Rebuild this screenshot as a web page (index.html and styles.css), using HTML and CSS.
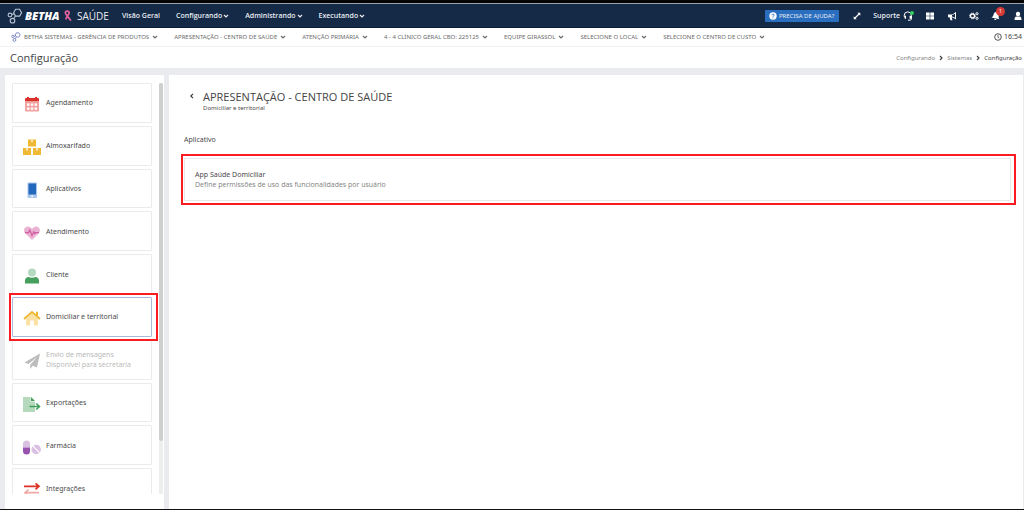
FILE: index.html
```html
<!DOCTYPE html>
<html lang="pt-BR">
<head>
<meta charset="utf-8">
<title>Configuração - Betha Saúde</title>
<link rel="stylesheet" href="styles.css">
</head>
<body>
<svg class="defs" aria-hidden="true">
  <symbol id="chev" viewBox="0 0 6 6"><path d="M1 2l2 2 2-2" fill="none" stroke="currentColor" stroke-width="1.2"/></symbol>
  <symbol id="next" viewBox="0 0 6 6"><path d="M2 1l2 2-2 2" fill="none" stroke="currentColor" stroke-width="1.2"/></symbol>
  <symbol id="rings" viewBox="0 0 16 16"><g fill="none" stroke="currentColor" stroke-width="1.1"><path d="M8.600 1.300h4l2 3.400-2 3.400h-4l-2-3.400z"/><circle cx="3" cy="7" r="1.900"/><circle cx="5.500" cy="12.700" r="2.300"/><path d="M5 6.600l2-.8M6.600 10.700l1.800-2.700"/></g></symbol>
</svg>
<header class="navbar">
  <a class="brand" href="#">
    <svg class="rings" aria-hidden="true"><use href="#rings"/></svg>
    <span class="brand-name">BETHA</span>
    <svg class="ribbon" viewBox="0 0 8 12" aria-hidden="true"><path d="M1.200 2.500C1.700.6 5 .6 5.200 2.600 5.400 4.500 2.500 6 1.800 9.500M1.200 2.500C1.400 5 5.500 7.500 6.800 10.800" fill="none" stroke="#e8609c" stroke-width="1.700"/></svg>
    <span class="product">SAÚDE</span>
  </a>
  <nav class="menu">
    <a href="#">Visão Geral</a>
    <a href="#">Configurando<svg class="chev"><use href="#chev"/></svg></a>
    <a href="#">Administrando<svg class="chev"><use href="#chev"/></svg></a>
    <a href="#">Executando<svg class="chev"><use href="#chev"/></svg></a>
  </nav>
  <div class="tools">
    <button class="help"><svg class="i8" viewBox="0 0 8 8" aria-hidden="true"><circle cx="4" cy="4" r="3.700" fill="#fff"/><path d="M2.900 3.200c0-1.500 2.300-1.300 2.200 0C5.100 3.900 4 3.900 4 4.800M4 5.500v.9" fill="none" stroke="#2a6fbf" stroke-width=".9"/></svg>PRECISA DE AJUDA?</button>
    <button class="tool expand" aria-label="Expandir"><svg class="i8" viewBox="0 0 8 8"><path d="M2 6l4-4" stroke="#fff" stroke-width="1.100"/><path d="M4.300.7h3v3zM.7 4.300v3h3z" fill="#fff"/></svg></button>
    <button class="tool support">Suporte<svg class="i10" viewBox="0 0 10 10"><path d="M1.200 5.500V4.500a3.600 3.600 0 0 1 7.200 0v3.300c0 1-.7 1.400-1.700 1.400H5" fill="none" stroke="#fff"/><path d="M1 4.700h2v3H1.800zM6.600 4.700h2v3h-2z" fill="#fff"/></svg><span class="online"></span></button>
    <button class="tool" aria-label="Sistemas"><svg class="i10" viewBox="0 0 10 10"><path d="M1 1.500h3.700v3.200H1zM5.300 1.500H9v3.200H5.300zM1 5.300h3.700v3.200H1zM5.300 5.300H9v3.200H5.300z" fill="#fff"/></svg></button>
    <button class="tool" aria-label="Novidades"><svg class="i10" viewBox="0 0 10 10"><path d="M1 3.400h3.500C6 3.300 7.300 2.500 8.300 1.300h.7v7h-.7C7.300 7.100 6 6.300 4.700 6.200l.8 3H3.400l-.8-3H1z" fill="#fff"/><path d="M5 4v1.600c1.100.1 2 .5 3 1.200v-4C7 3.500 6.100 3.900 5 4z" fill="#142a47"/></svg></button>
    <button class="tool" aria-label="Configurações"><svg class="i10" viewBox="0 0 10 10"><g fill="none" stroke="#fff"><circle cx="3.500" cy="5" r="2" stroke-width="1.300"/><circle cx="3.500" cy="5" r="2.900" stroke-dasharray="1.200 1.080"/><circle cx="8" cy="2.700" r="1.100"/><circle cx="8" cy="7.300" r="1.100"/></g></svg></button>
    <button class="tool" aria-label="Notificações"><svg class="i10" viewBox="0 0 10 10"><path d="M5 1C3 1 2.300 2.600 2.300 4.300c0 1.700-.6 2.300-1.500 3.200h8.400c-.9-.9-1.500-1.500-1.500-3.200C7.700 2.600 7 1 5 1zM3.900 8h2.200c0 1.500-2.200 1.500-2.200 0z" fill="#fff" transform="rotate(12 5 5)"/></svg><span class="count">1</span></button>
    <button class="tool" aria-label="Usuário"><svg class="i10" viewBox="0 0 10 10"><circle cx="5" cy="3" r="2.200" fill="#fff"/><path d="M1.500 9c0-2.500.7-3.500 2-3.500h3c1.300 0 2 1 2 3.500z" fill="#fff"/></svg></button>
  </div>
</header>
<div class="context">
  <svg class="rings small" aria-hidden="true"><use href="#rings"/></svg>
  <div class="filters">
    <a href="#">BETHA SISTEMAS - GERÊNCIA DE PRODUTOS<svg class="chev"><use href="#chev"/></svg></a>
    <a href="#">APRESENTAÇÃO - CENTRO DE SAÚDE<svg class="chev"><use href="#chev"/></svg></a>
    <a href="#">ATENÇÃO PRIMÁRIA<svg class="chev"><use href="#chev"/></svg></a>
    <a href="#">4 - 4 CLÍNICO GERAL CBO: 225125<svg class="chev"><use href="#chev"/></svg></a>
    <a href="#">EQUIPE GIRASSOL<svg class="chev"><use href="#chev"/></svg></a>
    <a href="#">SELECIONE O LOCAL<svg class="chev"><use href="#chev"/></svg></a>
    <a href="#">SELECIONE O CENTRO DE CUSTO<svg class="chev"><use href="#chev"/></svg></a>
  </div>
  <span class="clock"><svg class="i8" viewBox="0 0 8 8" aria-hidden="true"><circle cx="4" cy="4" r="3.300" fill="none" stroke="#555"/><path d="M4 2v2.300l1.300.8" fill="none" stroke="#555" stroke-width=".9"/></svg>16:54</span>
</div>
<div class="titlebar">
  <h1>Configuração</h1>
  <nav class="crumbs"><a href="#">Configurando</a><svg class="chev"><use href="#next"/></svg><a href="#">Sistemas</a><svg class="chev"><use href="#next"/></svg><span>Configuração</span></nav>
</div>
<main class="body">
  <aside class="side">
    <div class="scroller">
      <div class="list">
        <a class="card" href="#"><svg class="ico" viewBox="0 0 18 18"><path d="M2 7h14v8.500a1 1 0 0 1-1 1H3a1 1 0 0 1-1-1z" fill="#f0a3a0"/><path d="M4 8.500h2.500v2.200H4zM7.800 8.500h2.500v2.200H7.800zM11.600 8.500h2.500v2.200h-2.500zM4 12.500h2.500v2.200H4zM7.800 12.500h2.500v2.200H7.800zM11.600 12.500h2.500v2.200h-2.500z" fill="#fff"/><path d="M2 6.500V4a1 1 0 0 1 1-1h1V2h2v1h6V2h2v1h1a1 1 0 0 1 1 1v2.500z" fill="#d9302c"/></svg><span>Agendamento</span></a>
        <a class="card" href="#"><svg class="ico" viewBox="0 0 18 18"><path d="M5 1.500h8v7H5zM0 10h8v7H0zM10 10h8v7h-8z" fill="#efb935"/><path d="M8 1.500h2v3l-1-.7-1 .7zM3 10h2v3l-1-.7-1 .7zM13 10h2v3l-1-.7-1 .7z" fill="#fbe6ae"/></svg><span>Almoxarifado</span></a>
        <a class="card" href="#"><svg class="ico" viewBox="0 0 18 18"><rect x="4.500" y="1.500" width="9.500" height="15.500" rx="1" fill="#a9c6ec"/><path d="M5.500 2.500H13V13.500H5.500z" fill="#2268bd"/><circle cx="9.200" cy="15.200" r=".9" fill="#fff"/></svg><span>Aplicativos</span></a>
        <a class="card" href="#"><svg class="ico" viewBox="0 0 18 18"><path d="M9 16L2.200 9.200C.2 6.900 1 3.800 3.300 2.900 5.500 2 7.600 3 9 5c1.400-2 3.500-3 5.700-2.100 2.300.9 3.100 4 1.100 6.300z" fill="#ebb1d3"/><path d="M2 8.700h3.500l1.300-2.500L9 11.500l1.800-3.800 1 1.800 1-.8H16" fill="none" stroke="#ce5c9f" stroke-width="1.200"/></svg><span>Atendimento</span></a>
        <a class="card" href="#"><svg class="ico" viewBox="0 0 18 18"><circle cx="9" cy="5.500" r="4" fill="#b5d9c0"/><path d="M2 16.500V14c0-2.700 1.600-4 3.500-4 2.300 1 4.700 1 7 0 1.900 0 3.500 1.300 3.500 4v2.500z" fill="#479f5e"/></svg><span>Cliente</span></a>
        <a class="card active marked" href="#"><svg class="ico" viewBox="0 0 18 18"><path d="M3 9.800l6-5.200 6 5.200V16.500h-4.200V11.500H7.200v5H3z" fill="#fae2a5"/><path d="M1 10l8-7 8 7" fill="none" stroke="#edb730" stroke-width="1.800"/><path d="M13 2.800h2v4.800l-2-1.800z" fill="#edb730"/></svg><span>Domiciliar e territorial</span></a>
        <a class="card off" href="#"><svg class="ico" viewBox="0 0 18 18"><path d="M17 1.500L1.500 10.400l4 1.700L14 5 7.200 12.800V17l2.500-3.200 4.300 1.800z" fill="#bcbcbc"/></svg><span>Envio de mensagens<small>Disponível para secretaria</small></span></a>
        <a class="card" href="#"><svg class="ico" viewBox="0 0 18 18"><path d="M0 2h7.500v4.500H12V17H0z" fill="#b5d9bd"/><path d="M8 2l4 4H8z" fill="#479f5e"/><path d="M6.500 11.500H16M13.200 8.500l3.300 3-3.300 3" fill="none" stroke="#3f9f5b" stroke-width="1.600"/></svg><span>Exportações</span></a>
        <a class="card" href="#"><svg class="ico" viewBox="0 0 18 18"><path d="M0 9.500V6a3.500 3.500 0 0 1 7 0v3.500z" fill="#d9bfe2"/><path d="M0 9.500h7V13a3.500 3.500 0 0 1-7 0z" fill="#9753ae"/><circle cx="13.200" cy="11.500" r="4.700" fill="#d9bfe2"/><path d="M10 8.200l6.500 6.500" stroke="#fff" stroke-width="1.200"/></svg><span>Farmácia</span></a>
        <a class="card" href="#"><svg class="ico" viewBox="0 0 18 18"><path d="M1 5.300h14M12.500 2.300l3.500 3-3.500 3" fill="none" stroke="#dc3228" stroke-width="1.700"/><path d="M16 11.700H3M5.500 8.700l-3.500 3 3.500 3" fill="none" stroke="#efaaa5" stroke-width="1.700"/></svg><span>Integrações</span></a>
      </div>
      <div class="track"><div class="thumb"></div></div>
    </div>
  </aside>
  <section class="content">
    <div class="head">
      <button class="back" aria-label="Voltar"><svg class="i8" viewBox="0 0 8 8"><path d="M5 1.800L2.800 4 5 6.200" fill="none" stroke="#333" stroke-width="1.100"/></svg></button>
      <div><h2>APRESENTAÇÃO - CENTRO DE SAÚDE</h2><p>Domiciliar e territorial</p></div>
    </div>
    <h3>Aplicativo</h3>
    <a class="app marked" href="#"><strong>App Saúde Domiciliar</strong><span>Define permissões de uso das funcionalidades por usuário</span></a>
  </section>
</main>
</body>
</html>
```
FILE: styles.css
```css
* { box-sizing: border-box; }
body {
  margin: 0;
  min-height: 100vh;
  display: flex;
  flex-direction: column;
  border-top: 3px solid #050505;
  border-bottom: 1px solid #111;
  background: #e9ebef;
  color: #4a4a4a;
  font-family: "Noto Sans", "Open Sans", sans-serif;
  font-size: 7px;
  line-height: 10px;
}
a { color: inherit; text-decoration: none; }
button { border: 0; padding: 0; background: none; color: inherit; font: inherit; }
h1, h2, h3, p { margin: 0; font-weight: 400; }
svg { flex: none; }
.defs { position: absolute; width: 0; height: 0; }
.chev { width: 6px; height: 6px; }
.i8 { width: 8px; height: 8px; }
.i10 { width: 10px; height: 10px; }

.navbar {
  height: 25px;
  display: flex;
  align-items: center;
  padding: 0 1px 0 7px;
  border-top: 1px solid #9aa3b0;
  border-bottom: 1px solid #0c1d36;
  background: #142a47;
  color: #e8ecf2;
  font-family: "Open Sans", "Noto Sans", sans-serif;
}
.brand { display: flex; align-items: center; width: 115px; }
.rings { width: 16px; height: 16px; margin-right: 2px; color: #b9c3d2; }
.brand-name { width: 39px; color: #fff; font-size: 11px; font-weight: 800; font-style: italic; }
.ribbon { width: 8px; height: 12px; margin-right: 5px; }
.product { font-size: 10px; }
.menu { display: flex; gap: 16px; font-weight: 600; }
.menu a { display: flex; align-items: center; gap: 1px; white-space: nowrap; }
.tools { display: flex; align-items: center; gap: 12px; margin-left: auto; }
.help { display: flex; align-items: center; gap: 2px; height: 12px; margin-right: 2px; padding: 0 5px 0 4px; border-radius: 1px; background: #2a6fbf; font-family: "Noto Sans", "Open Sans", sans-serif; font-size: 6px; white-space: nowrap; }
.tool { position: relative; display: flex; align-items: center; }
.support { gap: 3px; font-weight: 600; }
.online { position: absolute; right: -1px; top: 0; width: 4px; height: 4px; border-radius: 50%; background: #2fd05a; }
.count { position: absolute; right: -4px; top: -4px; width: 9px; height: 9px; border-radius: 50%; background: #d83a36; font-size: 6px; line-height: 9px; text-align: center; }

.context {
  height: 19px;
  display: flex;
  align-items: center;
  padding: 0 2px 0 11px;
  border-bottom: 1px solid #f1f1f3;
  background: #fff;
  color: #6c6c6c;
  font-size: 6px;
}
.filters { display: flex; gap: 16px; }
.filters a { display: flex; align-items: center; gap: 3px; white-space: nowrap; }
.rings.small { width: 10px; height: 10px; margin-right: 3px; color: #5360b5; }
.clock { display: flex; align-items: center; gap: 2px; margin-left: auto; color: #444; font-size: 7px; }

.titlebar { height: 21px; display: flex; align-items: center; justify-content: space-between; padding: 0 2px 0 10px; background: #fff; }
h1, h2 { color: #444; font-family: "Open Sans", "Noto Sans", sans-serif; font-size: 11px; line-height: 14px; }
.crumbs { display: flex; align-items: center; gap: 3px; color: #858585; font-size: 6px; }
.crumbs svg, .crumbs span { color: #444; }

.body { flex: 1; display: flex; gap: 5px; padding: 7px 1px 0 5px; }
.side { width: 159px; padding-bottom: 14px; background: #fff; }
.scroller { height: 419px; display: flex; justify-content: space-between; padding: 8px 1px 0 7px; overflow: hidden; }
.list { width: 140px; min-height: 425px; display: grid; grid-auto-rows: 1fr; gap: 3px; align-self: flex-start; }
.card {
  position: relative;
  display: flex;
  align-items: center;
  gap: 5px;
  padding: 1px 10px 0;
  border: 1px solid #ebebeb;
  border-radius: 1px;
  background: #fff;
  white-space: nowrap;
}
.ico { width: 18px; height: 18px; margin-top: 2px; }
.card small { display: block; font-family: "Open Sans", "Noto Sans", sans-serif; font-size: 7px; }
.active { border-color: #a9b9dc; }
.off { color: #b8b8b8; }
.marked::after { content: ""; position: absolute; inset: -5px -7px -5px -4px; border: 2px solid #fa1c20; z-index: 1; pointer-events: none; }
.track { width: 4px; background: #eee; }
.thumb { height: 358px; border-radius: 2px; background: #cfcfcf; }

.content { flex: 1; padding: 15px 12px 0 15px; background: #fff; }
.head { display: flex; gap: 7px; padding-left: 4px; }
.back { height: 14px; }
.head p { font-size: 6px; line-height: 8px; }
h3 { margin: 22px 0 12px; font-size: 7px; line-height: 12px; }
.app { position: relative; display: block; padding: 11px 10px 10px; border: 1px solid #e8e8e8; }
.app strong, .app span { display: block; font-weight: 400; }
.app span { color: #808080; font-family: "Open Sans", "Noto Sans", sans-serif; }
.app.marked::after { inset: -5px -6px -5px -4px; }
```
